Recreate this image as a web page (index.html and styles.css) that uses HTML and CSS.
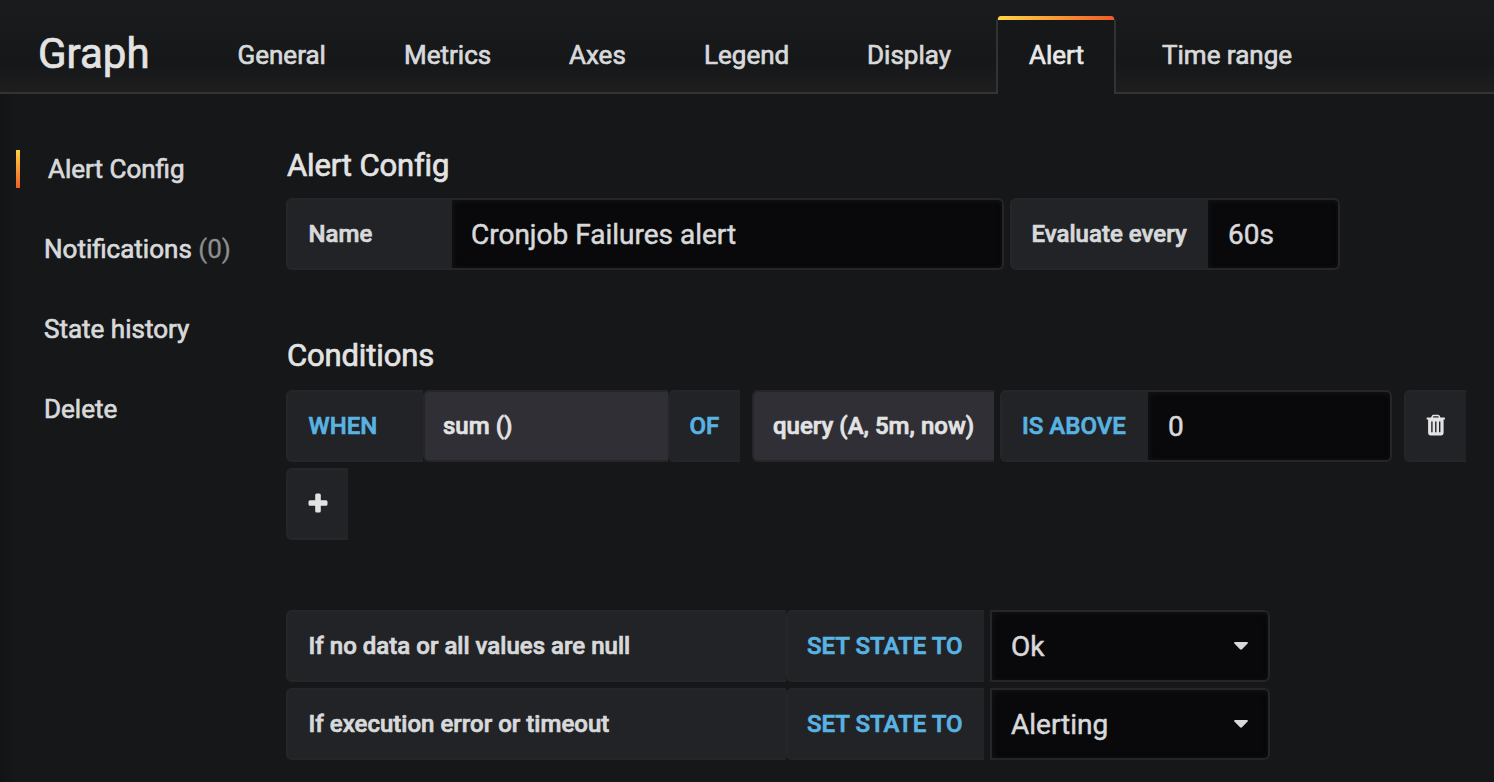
FILE: index.html
```html
<!DOCTYPE html>
<html lang="en">
<head>
<meta charset="utf-8">
<title>Graph</title>
<link rel="stylesheet" href="styles.css">
</head>
<body>
<header class="header">
  <h1 class="title">Graph</h1>
  <nav class="tabs">
    <a class="tab general">General</a>
    <a class="tab metrics">Metrics</a>
    <a class="tab axes">Axes</a>
    <a class="tab legend">Legend</a>
    <a class="tab display">Display</a>
    <a class="tab active">Alert</a>
    <a class="tab range">Time range</a>
  </nav>
</header>
<main class="main">
  <aside class="side">
    <a class="side-item selected">Alert Config</a>
    <a class="side-item">Notifications <span class="muted">(0)</span></a>
    <a class="side-item">State history</a>
    <a class="side-item">Delete</a>
  </aside>
  <section class="content">
    <h2 class="heading">Alert Config</h2>
    <div class="row config">
      <label class="cell label w-name">Name</label>
      <div class="cell input w-name-input">Cronjob Failures alert</div>
      <label class="cell label w-eval">Evaluate every</label>
      <div class="cell input w-eval-input">60s</div>
    </div>
    <h2 class="heading conditions">Conditions</h2>
    <div class="row">
      <div class="cell label key w-when">WHEN</div>
      <div class="cell part w-sum">sum ()</div>
      <div class="cell label key w-of">OF</div>
      <div class="cell part w-query">query (A, 5m, now)</div>
      <div class="cell label key w-above">IS ABOVE</div>
      <div class="cell input w-value">0</div>
      <div class="cell label button trash">
        <svg width="20" height="22" viewBox="0 0 20 22"><path fill="#e3e3e3" fill-rule="evenodd" d="M1.2 3.6H5L6 1.6Q6.4.7 7.5.7H12Q13.1.7 13.5 1.6L14.5 3.6H18.4Q19 3.6 19 4.2V4.9Q19 5.5 18.4 5.5H17.6V18.5Q17.6 21.5 15 21.5H4.7Q2.1 21.5 2.1 18.5V5.5H1.2Q.6 5.5.6 4.9V4.2Q.6 3.6 1.2 3.6ZM6.8 3.6H12.8L12.2 2.2H7.4ZM5.2 7.6V18.2H6.6V7.6ZM9.1 7.6V18.2H10.5V7.6ZM13 7.6V18.2H14.4V7.6Z"/></svg>
      </div>
    </div>
    <div class="row add">
      <div class="cell label button">
        <svg width="20" height="20" viewBox="0 0 20 20"><path fill="#e3e3e3" d="M8.7.5H11.3Q12.8.5 12.8 2V7.2H18Q19.5 7.2 19.5 8.7V11.3Q19.5 12.8 18 12.8H12.8V18Q12.8 19.5 11.3 19.5H8.7Q7.2 19.5 7.2 18V12.8H2Q.5 12.8.5 11.3V8.7Q.5 7.2 2 7.2H7.2V2Q7.2.5 8.7.5Z"/></svg>
      </div>
    </div>
    <div class="row state">
      <div class="cell label w-case">If no data or all values are null</div>
      <div class="cell label key w-set">SET STATE TO</div>
      <div class="cell input select">Ok<svg class="caret" width="14" height="8" viewBox="0 0 14 8"><path fill="#d8d9da" d="M1 0H13Q14.4.2 13.6 1.5L8 7.3Q7 8.1 6 7.3L.4 1.5Q-.4.2 1 0Z"/></svg></div>
    </div>
    <div class="row">
      <div class="cell label w-case">If execution error or timeout</div>
      <div class="cell label key w-set">SET STATE TO</div>
      <div class="cell input select">Alerting<svg class="caret" width="14" height="8" viewBox="0 0 14 8"><path fill="#d8d9da" d="M1 0H13Q14.4.2 13.6 1.5L8 7.3Q7 8.1 6 7.3L.4 1.5Q-.4.2 1 0Z"/></svg></div>
    </div>
  </section>
</main>
</body>
</html>
```
FILE: styles.css
```css
* { box-sizing: border-box; }
body {
  margin: 0;
  height: 782px;
  overflow: hidden;
  background: linear-gradient(90deg, #121315 0, #161719 16px);
  color: #d8d9da;
  font-family: Roboto, "Liberation Sans", sans-serif;
  font-size: 26px;
  -webkit-text-stroke: 0.7px currentColor;
}
.header {
  display: flex;
  height: 94px;
  border-bottom: 2px solid #333334;
  background: linear-gradient(#1a1b1d 0, #161719 70%, #1e1e1f 100%);
}
.title {
  margin: 0;
  width: 205.5px;
  padding-left: 38px;
  font-size: 42px;
  font-weight: 400;
  line-height: 107px;
  color: #e3e3e3;
}
.tabs { display: flex; padding-top: 16px; }
.tab { line-height: 78px; height: 78px; padding-left: 32px; white-space: nowrap; }
.general { width: 166.5px; }
.metrics { width: 165px; }
.axes { width: 135px; }
.legend { width: 163px; }
.display { width: 161px; }
.active {
  position: relative;
  width: 120px;
  padding-left: 31px;
  border: 2px solid #333334;
  border-width: 0 2px;
  border-radius: 6px 6px 0 0;
  height: 78px;
  background: #161719;
  color: #e9e9e9;
}
.active::before {
  content: "";
  position: absolute;
  left: 0;
  right: 0;
  top: 0;
  height: 4px;
  border-radius: 3px 3px 0 0;
  background: linear-gradient(90deg, #ffd544, #f05a28);
}
.active::after {
  content: "";
  position: absolute;
  left: 0;
  right: 0;
  bottom: -2px;
  height: 2px;
  background: #161719;
}
.range { padding-left: 46px; }
.main { display: flex; }
.side { width: 286px; padding: 56px 0 0 16px; }
.side-item {
  display: block;
  height: 38px;
  margin-bottom: 42px;
  padding-left: 28px;
  line-height: 38px;
}
.selected {
  padding-left: 28px;
  border-left: 4px solid;
  border-image: linear-gradient(#ffd544, #f05a28) 1;
}
.muted { color: #8e8e8e; -webkit-text-stroke: 0.3px currentColor; }
.content { padding-top: 52px; }
.heading {
  margin: 0 0 12px 1px;
  height: 40px;
  line-height: 40px;
  font-size: 31px;
  font-weight: 400;
  letter-spacing: -0.15px;
  color: #e3e3e3;
}
.conditions { margin-bottom: 14px; }
.row { display: flex; height: 72px; margin-bottom: 6px; }
.config { margin-bottom: 66px; }
.add { margin-bottom: 70px; }
.cell {
  height: 72px;
  flex: none;
  border: 2px solid #262628;
  white-space: nowrap;
}
.label, .part {
  padding-left: 20.5px;
  border-right-width: 0;
  border-radius: 6px 0 0 6px;
  font-size: 24px;
  font-weight: 500;
  line-height: 68px;
  letter-spacing: 0.02px;
}
.label { background: #222326; border-color: #252628; }
.part { background: #2f2f35; color: #e3e3e3; padding-left: 19px; }
.key { color: #59b3e2; }
.input {
  padding-left: 19px;
  border-left-width: 0;
  border-radius: 0 6px 6px 0;
  background: #09090b;
  box-shadow: inset 2px 2px 5px #121215, inset -1px -1px 4px #0f0f12;
  font-size: 28px;
  line-height: 69px;
  -webkit-text-stroke: 0.5px currentColor;
}
.w-name { width: 166px; }
.w-name-input { width: 552px; margin-right: 6px; }
.w-eval { width: 198px; padding-left: 19.5px; }
.w-eval-input { width: 132px; padding-left: 20px; }
.w-when { width: 137px; }
.w-sum { width: 245px; padding-left: 18px; }
.w-of { width: 72px; margin-right: 12px; padding-left: 19.5px; }
.w-query { width: 242px; margin-right: 6px; }
.w-above { width: 148px; padding-left: 20px; }
.w-value { width: 244px; margin-right: 12px; padding-left: 20px; }
.button { width: 62px; padding-left: 20px; }
.button svg { display: block; margin-top: 23px; }
.trash svg { margin-top: 22px; }
.w-case { width: 500px; }
.w-set { width: 198px; margin-right: 6px; padding-left: 19px; }
.select {
  display: flex;
  justify-content: space-between;
  width: 280px;
  padding-right: 20px;
  border-left-width: 2px;
}
.caret { margin-top: 30px; }
```
